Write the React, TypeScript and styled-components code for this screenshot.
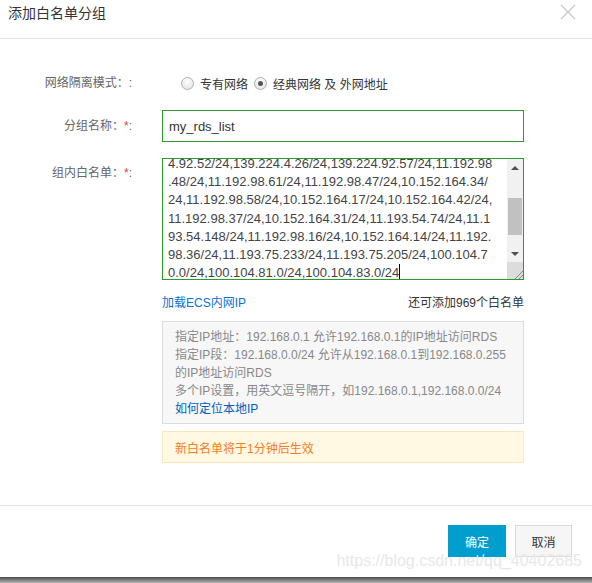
import React from "react";
import styled, { createGlobalStyle } from "styled-components";

const Global = createGlobalStyle`
  html, body { margin: 0; padding: 0; background: #fff; }
  body { font-family: "Liberation Sans", "Noto Sans CJK SC", sans-serif; font-size: 12px; color: #333; }
  * { box-sizing: border-box; }
`;

const Page = styled.div`
  width: 592px;
  display: flex;
  flex-direction: column;
`;

const Dialog = styled.div`
  position: relative;
  width: 592px;
  height: 577px;
  background: #fff;
  display: flex;
  flex-direction: column;
`;

const Shadow = styled.div`
  height: 6px;
  background: linear-gradient(#4c4c4c, #8a8a8a 60%, #b5b5b5);
`;

const Header = styled.div`
  height: 39px;
  border-bottom: 1px solid #e5e5e5;
  display: flex;
  justify-content: space-between;
  align-items: flex-start;
  padding: 4px 16px 0 8px;
`;

const Title = styled.div`
  font-size: 14px;
  line-height: 18px;
  color: #333;
`;

const Close = styled.svg`
  width: 16px;
  height: 16px;
`;

const Form = styled.div`
  padding: 32px 0 42px 0;
  display: flex;
  flex-direction: column;
`;

const Field = styled.div<{ $top?: number; $align?: string }>`
  display: flex;
  align-items: ${(p) => p.$align || "center"};
  margin-top: ${(p) => p.$top || 0}px;
`;

const Label = styled.div<{ $pt?: number }>`
  width: 132px;
  text-align: right;
  color: #666;
  line-height: 18px;
  padding-top: ${(p) => p.$pt || 0}px;
  margin-right: 30px;
  white-space: nowrap;
`;

const Star = styled.span`
  color: #e4393c;
`;

const Radios = styled.div`
  display: flex;
  align-items: center;
  height: 24px;
  padding-left: 19px;
`;

const RadioItem = styled.label`
  display: flex;
  align-items: center;
  color: #333;
  margin-right: 6px;
`;

const RadioCircle = styled.span<{ $checked?: boolean }>`
  width: 13px;
  height: 13px;
  border-radius: 50%;
  border: 1px solid #b0b0b0;
  background: radial-gradient(circle at 50% 35%, #fff, #dedede);
  margin-right: 6px;
  display: flex;
  align-items: center;
  justify-content: center;
  &::after {
    content: "";
    width: 5px;
    height: 5px;
    border-radius: 50%;
    background: ${(p) => (p.$checked ? "#555" : "transparent")};
  }
`;

const Input = styled.div`
  width: 362px;
  height: 32px;
  border: 1px solid #2a9c2a;
  padding: 0 6px;
  display: flex;
  align-items: center;
  font-size: 13px;
  color: #333;
`;

const TextArea = styled.div`
  width: 362px;
  height: 122px;
  border: 1px solid #2a9c2a;
  display: flex;
  overflow: hidden;
`;

const TextBody = styled.div`
  flex: 1;
  overflow: hidden;
  padding-left: 5px;
`;

const Lines = styled.div`
  margin-top: -4px;
  font-size: 13px;
  line-height: 18.2px;
  color: #444;
  white-space: pre;
`;

const Caret = styled.span`
  display: inline-block;
  width: 1px;
  height: 16px;
  background: #000;
  vertical-align: -3px;
`;

const ScrollBar = styled.div`
  width: 16px;
  background: #f1f1f1;
  display: flex;
  flex-direction: column;
  align-items: center;
`;

const Arrow = styled.div<{ $down?: boolean }>`
  height: 17px;
  width: 100%;
  display: flex;
  align-items: center;
  justify-content: center;
  &::after {
    content: "";
    border-left: 4px solid transparent;
    border-right: 4px solid transparent;
    ${(p) => (p.$down ? "border-top: 4px solid #505050;" : "border-bottom: 4px solid #505050;")}
  }
`;

const Track = styled.div`
  flex: 1;
  width: 100%;
  padding: 22px 1px 10px 1px;
  display: flex;
`;

const Thumb = styled.div`
  flex: 1;
  background: #c1c1c1;
`;

const Resize = styled.div`
  width: 100%;
  height: 17px;
  background: #dcdcdc;
  display: flex;
  align-items: flex-end;
  justify-content: flex-end;
`;

const Side = styled.div<{ $top: number }>`
  margin-left: 162px;
  width: 362px;
  margin-top: ${(p) => p.$top}px;
`;

const LinkRow = styled.div`
  display: flex;
  justify-content: space-between;
  line-height: 18px;
`;

const Link = styled.a<{ $dark?: boolean }>`
  color: ${(p) => (p.$dark ? "#0060c0" : "#0a74d0")};
  text-decoration: none;
`;

const Tips = styled.div`
  border: 1px solid #dcdcdc;
  background: #f7f7f7;
  padding: 6px 12px 6px 12px;
  line-height: 18px;
  color: #888;
  height: 103px;
`;

const Warn = styled.div`
  height: 32px;
  border: 1px solid #fce6bd;
  background: #fff8e3;
  color: #f77d1c;
  padding: 0 12px;
  display: flex;
  align-items: center;
`;

const Footer = styled.div`
  border-top: 1px solid #e5e5e5;
  padding: 19px 20px 20px;
  display: flex;
  justify-content: flex-end;
  gap: 9px;
`;

const Button = styled.button<{ $primary?: boolean }>`
  height: 32px;
  width: ${(p) => (p.$primary ? 58 : 57)}px;
  font-family: inherit;
  font-size: 12px;
  border: 1px solid ${(p) => (p.$primary ? "#009dcf" : "#d9d9d9")};
  background: ${(p) => (p.$primary ? "#009dcf" : "#f6f6f6")};
  color: ${(p) => (p.$primary ? "#fff" : "#333")};
  padding: 0;
`;

const Watermark = styled.div`
  position: absolute;
  right: 10px;
  top: 552px;
  font-family: "Liberation Sans", sans-serif;
  font-size: 16px;
  color: #e8e8e8;
  pointer-events: none;
`;

const lines = [
  "4.92.52/24,139.224.4.26/24,139.224.92.57/24,11.192.98",
  ".48/24,11.192.98.61/24,11.192.98.47/24,10.152.164.34/",
  "24,11.192.98.58/24,10.152.164.17/24,10.152.164.42/24,",
  "11.192.98.37/24,10.152.164.31/24,11.193.54.74/24,11.1",
  "93.54.148/24,11.192.98.16/24,10.152.164.14/24,11.192.",
  "98.36/24,11.193.75.233/24,11.193.75.205/24,100.104.7",
];

export default function App() {
  return (
    <Page>
      <Global />
      <Dialog>
        <Header>
          <Title>添加白名单分组</Title>
          <Close viewBox="0 0 16 16">
            <path d="M1 1 L15 15 M15 1 L1 15" stroke="#c9c9c9" strokeWidth="1.4" fill="none" />
          </Close>
        </Header>
        <Form>
          <Field>
            <Label>网络隔离模式：:</Label>
            <Radios>
              <RadioItem>
                <RadioCircle />
                专有网络
              </RadioItem>
              <RadioItem>
                <RadioCircle $checked />
                经典网络 及 外网地址
              </RadioItem>
            </Radios>
          </Field>
          <Field $top={15}>
            <Label>
              分组名称：<Star>*</Star>:
            </Label>
            <Input>my_rds_list</Input>
          </Field>
          <Field $top={16} $align="flex-start">
            <Label $pt={6}>
              组内白名单：<Star>*</Star>:
            </Label>
            <TextArea>
              <TextBody>
                <Lines>
                  {lines.map((l) => l + "\n")}
                  {"0.0/24,100.104.81.0/24,100.104.83.0/24"}
                  <Caret />
                </Lines>
              </TextBody>
              <ScrollBar>
                <Arrow />
                <Track>
                  <Thumb />
                </Track>
                <Arrow $down />
                <Resize>
                  <svg width="10" height="10" viewBox="0 0 10 10">
                    <path d="M2 10 L10 2 M6 10 L10 6" stroke="#8a8a8a" strokeWidth="1" />
                  </svg>
                </Resize>
              </ScrollBar>
            </TextArea>
          </Field>
          <Side $top={14}>
            <LinkRow>
              <Link href="#">加载ECS内网IP</Link>
              <span>还可添加969个白名单</span>
            </LinkRow>
          </Side>
          <Side $top={9}>
            <Tips>
              <div>指定IP地址：192.168.0.1 允许192.168.0.1的IP地址访问RDS</div>
              <div>指定IP段：192.168.0.0/24 允许从192.168.0.1到192.168.0.255</div>
              <div>的IP地址访问RDS</div>
              <div>多个IP设置，用英文逗号隔开，如192.168.0.1,192.168.0.0/24</div>
              <div>
                <Link href="#" $dark>
                  如何定位本地IP
                </Link>
              </div>
            </Tips>
          </Side>
          <Side $top={7}>
            <Warn>新白名单将于1分钟后生效</Warn>
          </Side>
        </Form>
        <Footer>
          <Button $primary>确定</Button>
          <Button>取消</Button>
        </Footer>
        <Watermark>https://blog.csdn.net/qq_40402685</Watermark>
      </Dialog>
      <Shadow />
    </Page>
  );
}
